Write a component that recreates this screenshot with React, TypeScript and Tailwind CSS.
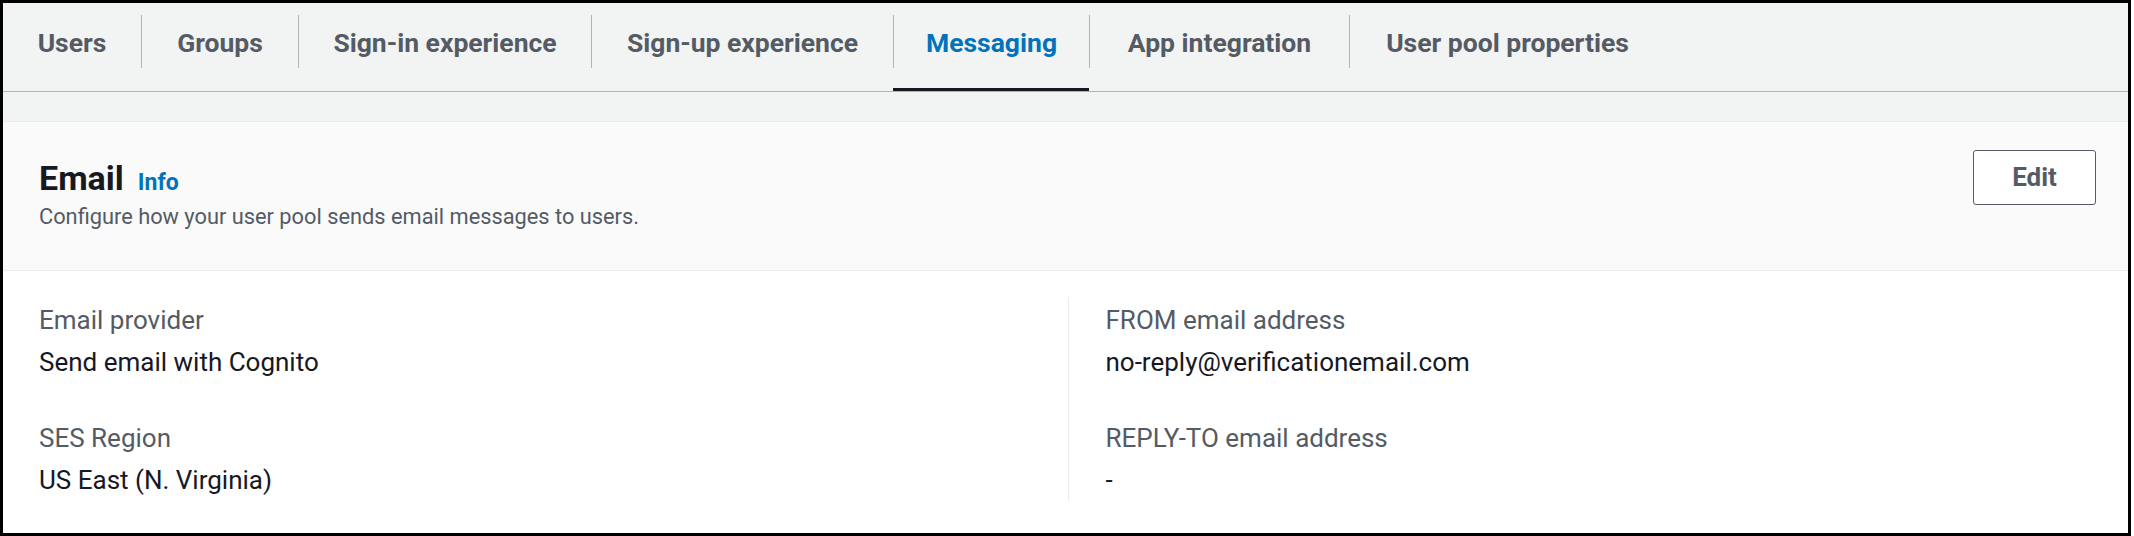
import React from "react";

const tabs = [
  { label: "Users", w: "w-[138px]" },
  { label: "Groups", w: "w-[157px]" },
  { label: "Sign-in experience", w: "w-[293px]" },
  { label: "Sign-up experience", w: "w-[302px]" },
  { label: "Messaging", w: "w-[196px]", active: true },
  { label: "App integration", w: "w-[260px]" },
  { label: "User pool properties", w: "w-[316px]" },
];

function Field({ label, value, first }: { label: string; value: string; first?: boolean }) {
  return (
    <div className={first ? "" : "mt-[46px]"}>
      <div className="text-[26px] leading-[30px] text-[#545b64]">{label}</div>
      <div className="mt-[12px] text-[26px] leading-[30px] text-[#16191f]">{value}</div>
    </div>
  );
}

export default function App() {
  return (
    <div
      className="w-[2131px] h-[536px] border-[3px] border-black bg-[#f2f3f3] flex flex-col"
      style={{ fontFamily: "Roboto, 'Noto Sans', sans-serif" }}
    >
      {/* Tabs */}
      <div className="h-[89px] shrink-0 border-b border-[#aab7b8] flex">
        {tabs.map((t, i) => (
          <div key={t.label} className={`relative h-full ${t.w} flex flex-col`}>
            <div
              className={`mt-[12px] h-[53px] flex items-center justify-center ${
                i > 0 ? "border-l border-[#aab7b8]" : ""
              }`}
            >
              <span
                className={`text-[26.5px] font-bold leading-[32px] pt-[2px] ${
                  t.active ? "text-[#0073bb]" : "text-[#545b64]"
                }`}
              >
                {t.label}
              </span>
            </div>
            {t.active && <div className="absolute left-0 right-0 bottom-0 h-[3px] bg-[#16191f]" />}
          </div>
        ))}
      </div>

      <div className="h-[29px] shrink-0" />

      {/* Container */}
      <div className="flex-1 flex flex-col bg-white border-t border-[#eaeded]">
        {/* Header */}
        <div className="h-[149px] shrink-0 bg-[#fafafa] border-b border-[#eaeded] pl-[36px] pr-[32px] flex justify-between items-start">
          <div className="pt-[36px]">
            <div className="flex items-baseline gap-[14px] h-[40px]">
              <span className="text-[34px] leading-[40px] font-bold text-[#16191f]">Email</span>
              <span className="text-[23px] font-bold text-[#0073bb]">Info</span>
            </div>
            <div className="mt-[4px] text-[21.8px] leading-[30px] text-[#545b64]">
              Configure how your user pool sends email messages to users.
            </div>
          </div>
          <button className="mt-[28px] w-[123px] h-[55px] rounded-[3px] border border-[#545b64] bg-white text-[26px] font-bold text-[#545b64]">
            Edit
          </button>
        </div>

        {/* Body */}
        <div className="flex-1 px-[36px] pt-[26px] grid grid-cols-2">
          <div className="pt-[8px] pb-[6px] h-[204px]">
            <Field label="Email provider" value="Send email with Cognito" first />
            <Field label="SES Region" value="US East (N. Virginia)" />
          </div>
          <div className="pt-[8px] pb-[6px] h-[204px] border-l border-[#eaeded] pl-[37px] ml-[2px]">
            <Field label="FROM email address" value="no-reply@verificationemail.com" first />
            <Field label="REPLY-TO email address" value="-" />
          </div>
        </div>
      </div>
    </div>
  );
}
